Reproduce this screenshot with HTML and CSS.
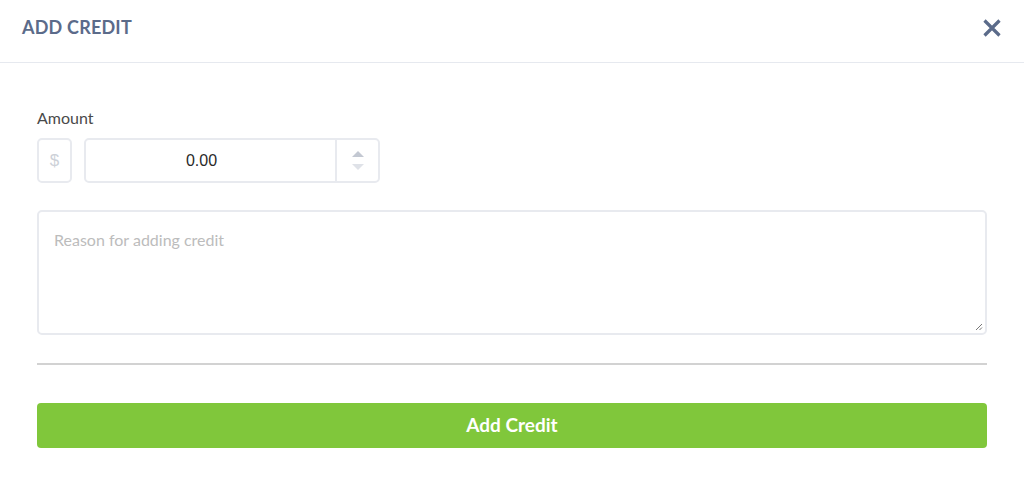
FILE: index.html
```html
<!DOCTYPE html>
<html>
<head>
<meta charset="utf-8">
<link rel="stylesheet" href="styles.css">
</head>
<body>
<div class="modal">
  <header class="modal-header">
    <h1 class="modal-title">ADD CREDIT</h1>
    <button class="close-btn" aria-label="Close">
      <svg width="20" height="20" viewBox="0 0 20 20"><path d="M2.5 2.5 L17.5 17.5 M17.5 2.5 L2.5 17.5" stroke="#5b6b8a" stroke-width="3.2" stroke-linecap="butt" fill="none"/></svg>
    </button>
  </header>
  <div class="modal-body">
    <label class="field-label">Amount</label>
    <div class="amount-row">
      <div class="currency">$</div>
      <div class="number-input">
        <div class="number-value">0.00</div>
        <div class="spinner">
          <span class="arrow up"></span>
          <span class="arrow down"></span>
        </div>
      </div>
    </div>
    <div class="textarea">
      <span class="placeholder">Reason for adding credit</span>
      <svg class="grip" width="8" height="8" viewBox="0 0 8 8"><path d="M1 7 L7 1 M4.5 7 L7 4.5" stroke="#777" stroke-width="1" fill="none"/></svg>
    </div>
    <hr class="divider">
    <button class="submit">Add Credit</button>
  </div>
</div>
</body>
</html>
```

FILE: styles.css
```css
html, body {
  margin: 0;
  padding: 0;
  background: #ffffff;
}
body {
  font-family: Lato, "Noto Sans", sans-serif;
  width: 1024px;
  height: 484px;
  overflow: hidden;
}
.modal-header {
  height: 62px;
  border-bottom: 1px solid #e6e9ef;
  display: flex;
  align-items: center;
  justify-content: space-between;
  padding: 0 22px;
  box-sizing: content-box;
}
.modal-title {
  margin: 0;
  font-size: 18px;
  font-weight: 700;
  color: #5b6b8a;
  letter-spacing: 0.2px;
  position: relative;
  top: -4px;
}
.close-btn {
  border: 0;
  background: none;
  padding: 0;
  width: 20px;
  height: 20px;
  position: relative;
  top: -3px;
}
.close-btn svg { display: block; }
.modal-body {
  padding: 46px 37px 0 37px;
}
.field-label {
  display: block;
  font-size: 16px;
  color: #4a4a4a;
  line-height: 18px;
  height: 29px;
}
.amount-row {
  display: flex;
  gap: 12px;
  height: 45px;
}
.currency {
  width: 35px;
  box-sizing: border-box;
  border: 2px solid #e8eaef;
  border-radius: 5px;
  display: flex;
  align-items: center;
  justify-content: center;
  color: #cdd1d8;
  font-size: 17px;
  font-family: "Liberation Sans", sans-serif;
}
.number-input {
  width: 296px;
  box-sizing: border-box;
  border: 2px solid #e8eaef;
  border-radius: 5px;
  display: flex;
}
.number-value {
  flex: 1;
  display: flex;
  align-items: center;
  justify-content: center;
  padding-right: 18px;
  font-family: "Liberation Sans", sans-serif;
  font-size: 16px;
  color: #2a2a2a;
  border-right: 2px solid #e8eaef;
}
.spinner {
  width: 41px;
  display: flex;
  flex-direction: column;
  align-items: center;
  justify-content: center;
  gap: 7px;
}
.arrow {
  width: 0;
  height: 0;
  border-left: 6px solid transparent;
  border-right: 6px solid transparent;
}
.arrow.up { border-bottom: 6px solid #c3c8d2; }
.arrow.down { border-top: 6px solid #dfe2e8; }
.textarea {
  margin-top: 27px;
  height: 125px;
  box-sizing: border-box;
  border: 2px solid #e8eaef;
  border-radius: 5px;
  padding: 18px 15px;
  position: relative;
}
.placeholder {
  font-size: 16px;
  color: #bcbcbc;
}
.grip {
  position: absolute;
  right: 2px;
  bottom: 2px;
}
.divider {
  margin: 28px 0 0 0;
  border: 0;
  height: 2px;
  background: #d2d2d2;
}
.submit {
  display: block;
  margin-top: 38px;
  width: 100%;
  height: 45px;
  padding: 0 0 3px 0;
  border: 0;
  border-radius: 4px;
  background: #80c73b;
  color: #ffffff;
  font-family: Lato, "Noto Sans", sans-serif;
  font-weight: 700;
  font-size: 19px;
}
```
